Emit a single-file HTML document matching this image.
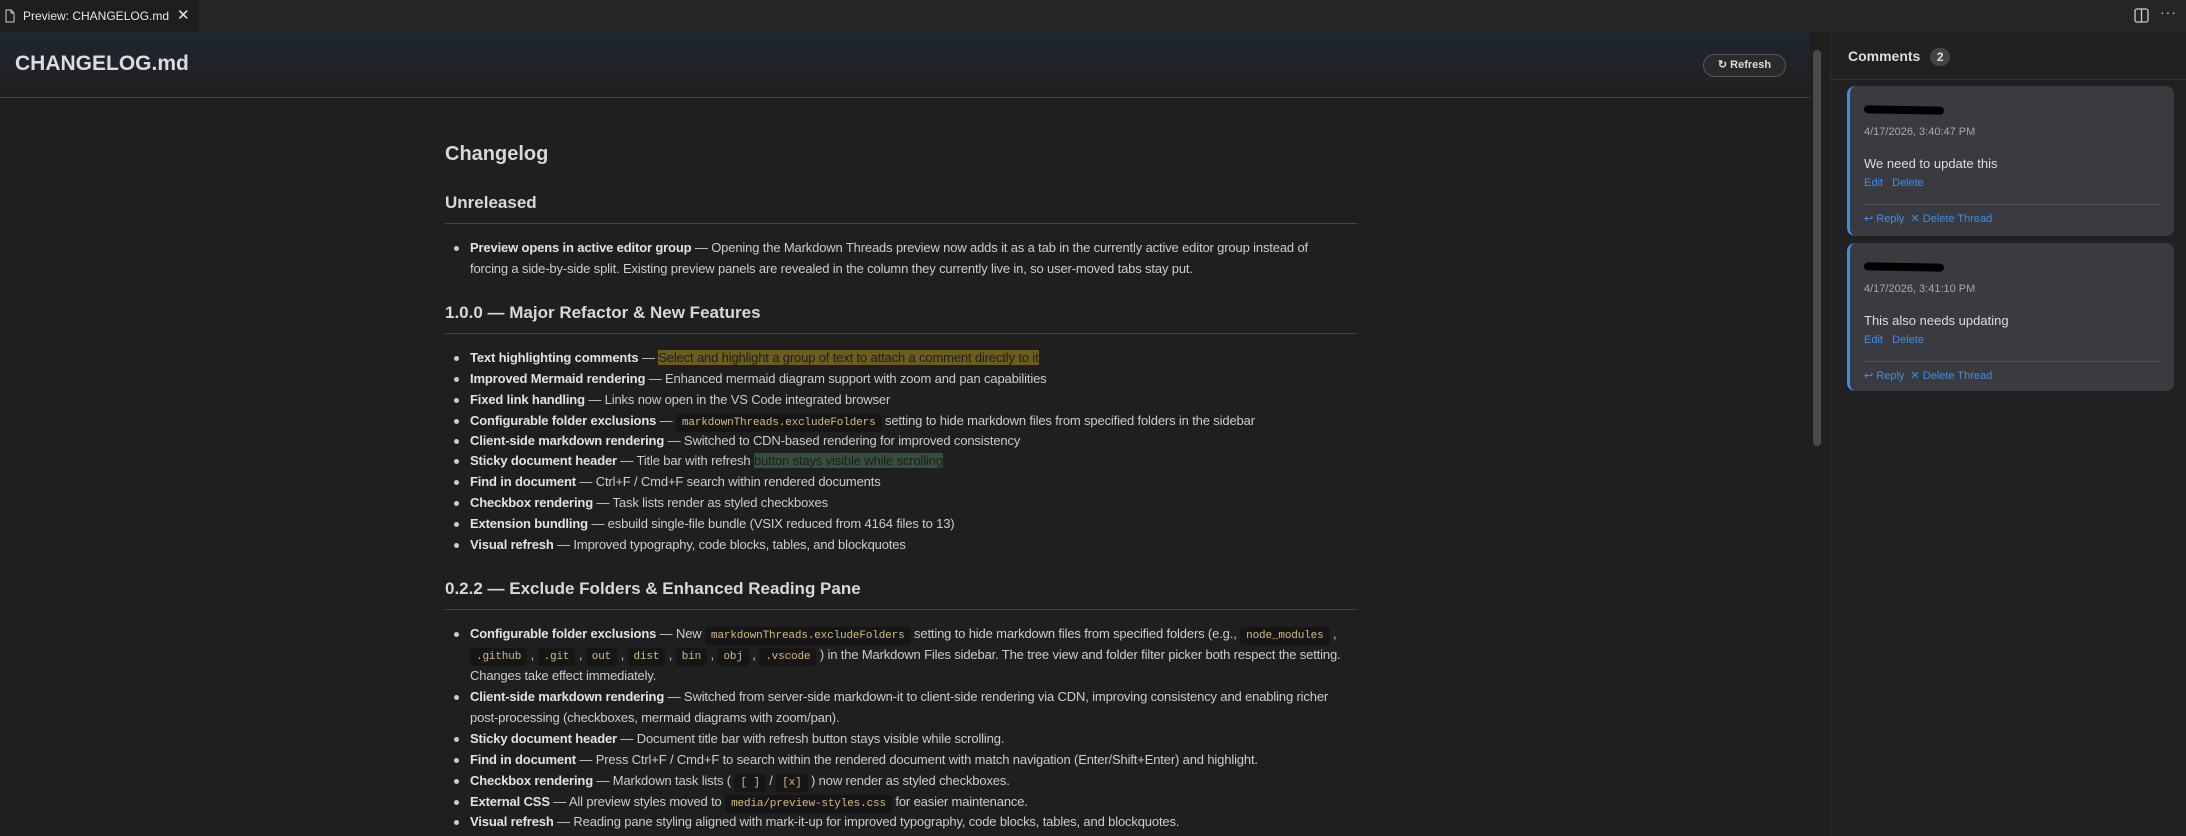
<!DOCTYPE html>
<html><head><meta charset="utf-8">
<style>
*{margin:0;padding:0;box-sizing:border-box}
body{width:2186px;height:836px;background:#1f1f1f;font-family:"Liberation Sans",sans-serif;color:#cccccc;position:relative;overflow:hidden}
.tabbar{position:absolute;left:0;top:0;width:2186px;height:32px;background:#252526}
.tab{position:absolute;left:0;top:0;width:199px;height:32px;background:#1e1e1e;font-size:12px;color:#e8e8e8;line-height:32px;padding-left:23px}
.hdr{position:absolute;left:0;top:32px;width:1810px;height:66px;background:linear-gradient(#1f2631,#202020);border-bottom:1px solid #444}
.title{position:absolute;left:15px;top:20px;font-size:21px;font-weight:bold;color:#dcdcdc}
.btn{position:absolute;left:1703px;top:54px;width:83px;height:23px;border:1px solid #555;border-radius:12px;background:#2a2a2a;color:#ddd;font-size:11px;font-weight:bold;text-align:center;line-height:21px}
.l{position:absolute;left:470px;white-space:nowrap;font-size:13px;line-height:20px;letter-spacing:-0.15px;color:#cccccc}
.l b{color:#e2e2e2}
.dot{position:absolute;left:454px;width:5px;height:5px;border-radius:50%;background:#ccc}
.h{position:absolute;left:445px;white-space:nowrap;font-weight:bold;color:#d8d8d8}
.rule{position:absolute;left:445px;width:912px;height:1px;background:#454545}
code{font-family:"Liberation Mono",monospace;font-size:11px;color:#d7ba7d;background:#161616;padding:3px 6px;border-radius:3px}
.hy{background:#6b5d1f;color:#1e1e1e}
.hg{background:#35503a;color:#1e1e1e}
.sb{position:absolute;left:1830px;top:32px;width:356px;height:804px;background:#212121;border-left:1px solid #2b2b2b}
.card{position:absolute;left:1847px;width:327px;background:#393b40;border-radius:8px;border-left:3px solid #3b8eea}
.card .red{position:absolute;left:14px;top:20px;width:80px;height:8px;background:#000;border-radius:4px;transform:rotate(1deg)}
.card .dt{position:absolute;left:14px;top:40px;font-size:11px;color:#a8a8a8}
.card .tx{position:absolute;left:14px;top:70px;font-size:13px;color:#dddddd}
.card .ln{position:absolute;left:14px;font-size:11px;color:#3b8eea}
.card .sep{position:absolute;left:14px;width:296px;height:1px;background:#4d4f55}
</style></head><body>
<div class="tabbar">
 <div class="tab"><svg style="position:absolute;left:5px;top:9px" width="10" height="14" viewBox="0 0 10 14"><path d="M1 1h5l3 3v9H1z M6 1v3h3" fill="none" stroke="#ccc" stroke-width="1"/></svg>Preview: CHANGELOG.md<span style="position:absolute;left:177px;top:0;font-size:15px">✕</span></div>
 <svg style="position:absolute;left:2134px;top:8px" width="15" height="15" viewBox="0 0 15 15"><rect x="1" y="1" width="13" height="13" rx="2" fill="none" stroke="#ccc" stroke-width="1.3"/><line x1="7.5" y1="1" x2="7.5" y2="14" stroke="#ccc" stroke-width="1.3"/></svg>
 <div style="position:absolute;left:2160px;top:4px;font-size:14px;color:#ccc;letter-spacing:1px">···</div>
</div>
<div class="hdr"><div class="title">CHANGELOG.md</div></div>
<div class="btn">↻ Refresh</div>
<div style="position:absolute;left:1812px;top:32px;width:12px;height:804px;background:#1f1f1f"></div>
<div style="position:absolute;left:1813px;top:50px;width:8px;height:396px;background:#4a4a4a;border-radius:4px"></div>

<div class="h" style="top:143px;font-size:20px">Changelog</div>
<div class="h" style="top:193px;font-size:17px">Unreleased</div>
<div class="rule" style="top:223px"></div>
<div class="dot" style="top:246px"></div>
<div class="l" style="top:238px"><b>Preview opens in active editor group</b> — Opening the Markdown Threads preview now adds it as a tab in the currently active editor group instead of</div>
<div class="l" style="top:259px">forcing a side-by-side split. Existing preview panels are revealed in the column they currently live in, so user-moved tabs stay put.</div>

<div class="h" style="top:303px;font-size:17px">1.0.0 — Major Refactor &amp; New Features</div>
<div class="rule" style="top:333px"></div>
<div class="dot" style="top:356px"></div><div class="l" style="top:348px"><b>Text highlighting comments</b> — <span class="hy">Select and highlight a group of text to attach a comment directly to it</span></div>
<div class="dot" style="top:377px"></div><div class="l" style="top:369px"><b>Improved Mermaid rendering</b> — Enhanced mermaid diagram support with zoom and pan capabilities</div>
<div class="dot" style="top:398px"></div><div class="l" style="top:390px"><b>Fixed link handling</b> — Links now open in the VS Code integrated browser</div>
<div class="dot" style="top:419px"></div><div class="l" style="top:411px"><b>Configurable folder exclusions</b> — <code>markdownThreads.excludeFolders</code> setting to hide markdown files from specified folders in the sidebar</div>
<div class="dot" style="top:439px"></div><div class="l" style="top:431px"><b>Client-side markdown rendering</b> — Switched to CDN-based rendering for improved consistency</div>
<div class="dot" style="top:459px"></div><div class="l" style="top:451px"><b>Sticky document header</b> — Title bar with refresh <span class="hg">button stays visible while scrolling</span></div>
<div class="dot" style="top:480px"></div><div class="l" style="top:472px"><b>Find in document</b> — Ctrl+F / Cmd+F search within rendered documents</div>
<div class="dot" style="top:501px"></div><div class="l" style="top:493px"><b>Checkbox rendering</b> — Task lists render as styled checkboxes</div>
<div class="dot" style="top:522px"></div><div class="l" style="top:514px"><b>Extension bundling</b> — esbuild single-file bundle (VSIX reduced from 4164 files to 13)</div>
<div class="dot" style="top:543px"></div><div class="l" style="top:535px"><b>Visual refresh</b> — Improved typography, code blocks, tables, and blockquotes</div>

<div class="h" style="top:579px;font-size:17px">0.2.2 — Exclude Folders &amp; Enhanced Reading Pane</div>
<div class="rule" style="top:609px"></div>
<div class="dot" style="top:632px"></div><div class="l" style="top:624px"><b>Configurable folder exclusions</b> — New <code>markdownThreads.excludeFolders</code> setting to hide markdown files from specified folders (e.g., <code>node_modules</code> ,</div>
<div class="l" style="top:645px"><code>.github</code> , <code>.git</code> , <code>out</code> , <code>dist</code> , <code>bin</code> , <code>obj</code> , <code>.vscode</code> ) in the Markdown Files sidebar. The tree view and folder filter picker both respect the setting.</div>
<div class="l" style="top:666px">Changes take effect immediately.</div>
<div class="dot" style="top:695px"></div><div class="l" style="top:687px"><b>Client-side markdown rendering</b> — Switched from server-side markdown-it to client-side rendering via CDN, improving consistency and enabling richer</div>
<div class="l" style="top:708px">post-processing (checkboxes, mermaid diagrams with zoom/pan).</div>
<div class="dot" style="top:737px"></div><div class="l" style="top:729px"><b>Sticky document header</b> — Document title bar with refresh button stays visible while scrolling.</div>
<div class="dot" style="top:758px"></div><div class="l" style="top:750px"><b>Find in document</b> — Press Ctrl+F / Cmd+F to search within the rendered document with match navigation (Enter/Shift+Enter) and highlight.</div>
<div class="dot" style="top:779px"></div><div class="l" style="top:771px"><b>Checkbox rendering</b> — Markdown task lists ( <code>[ ]</code> / <code>[x]</code> ) now render as styled checkboxes.</div>
<div class="dot" style="top:800px"></div><div class="l" style="top:792px"><b>External CSS</b> — All preview styles moved to <code>media/preview-styles.css</code> for easier maintenance.</div>
<div class="dot" style="top:820px"></div><div class="l" style="top:812px"><b>Visual refresh</b> — Reading pane styling aligned with mark-it-up for improved typography, code blocks, tables, and blockquotes.</div>

<div class="sb">
 <div style="position:absolute;left:17px;top:16px;font-size:14px;font-weight:bold;color:#dddddd">Comments <span style="display:inline-block;margin-left:6px;width:20px;height:18px;border-radius:9px;background:#444;color:#ddd;font-size:12px;text-align:center;line-height:18px">2</span></div>
 <div style="position:absolute;left:0;top:47px;width:356px;height:1px;background:#333"></div>
</div>
<div class="card" style="top:86px;height:150px">
 <div class="red"></div>
 <div class="dt">4/17/2026, 3:40:47 PM</div>
 <div class="tx">We need to update this</div>
 <div class="ln" style="top:91px">Edit &nbsp;&nbsp;Delete</div>
 <div class="sep" style="top:118px"></div>
 <div class="ln" style="top:126px">↩ Reply &nbsp;✕ Delete Thread</div>
</div>
<div class="card" style="top:243px;height:148px">
 <div class="red"></div>
 <div class="dt">4/17/2026, 3:41:10 PM</div>
 <div class="tx">This also needs updating</div>
 <div class="ln" style="top:91px">Edit &nbsp;&nbsp;Delete</div>
 <div class="sep" style="top:118px"></div>
 <div class="ln" style="top:126px">↩ Reply &nbsp;✕ Delete Thread</div>
</div>
</body></html>
